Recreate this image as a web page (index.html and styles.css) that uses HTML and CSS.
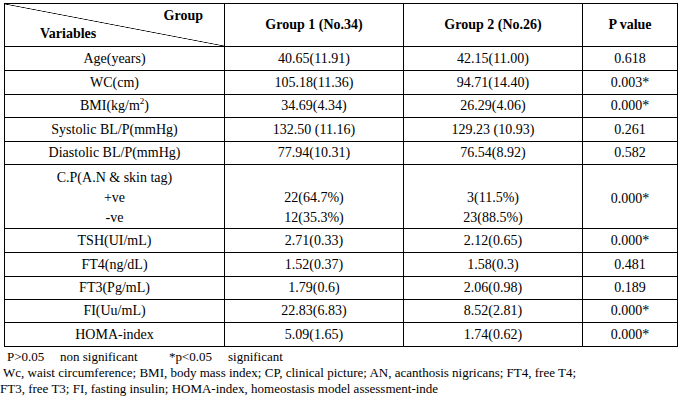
FILE: index.html
```html
<!DOCTYPE html>
<html>
<head>
<meta charset="utf-8">
<link rel="stylesheet" href="styles.css">
</head>
<body>
<div class="page">
  <div class="table">
    <div class="cell head diag">
      <div class="diag-group">Group</div>
      <div class="diag-var">Variables</div>
    </div>
    <div class="cell head">Group 1 (No.34)</div>
    <div class="cell head">Group 2 (No.26)</div>
    <div class="cell head">P value</div>

    <div class="cell">Age(years)</div>
    <div class="cell">40.65(11.91)</div>
    <div class="cell">42.15(11.00)</div>
    <div class="cell">0.618</div>

    <div class="cell">WC(cm)</div>
    <div class="cell">105.18(11.36)</div>
    <div class="cell">94.71(14.40)</div>
    <div class="cell">0.003*</div>

    <div class="cell">BMI(kg/m<sup>2</sup>)</div>
    <div class="cell">34.69(4.34)</div>
    <div class="cell">26.29(4.06)</div>
    <div class="cell">0.000*</div>

    <div class="cell">Systolic BL/P(mmHg)</div>
    <div class="cell">132.50 (11.16)</div>
    <div class="cell">129.23 (10.93)</div>
    <div class="cell">0.261</div>

    <div class="cell">Diastolic BL/P(mmHg)</div>
    <div class="cell">77.94(10.31)</div>
    <div class="cell">76.54(8.92)</div>
    <div class="cell">0.582</div>

    <div class="cell multi">
      <div class="ln">C.P(A.N &amp; skin tag)</div>
      <div class="ln">+ve</div>
      <div class="ln">-ve</div>
    </div>
    <div class="cell multi bottom">
      <div class="ln">22(64.7%)</div>
      <div class="ln">12(35.3%)</div>
    </div>
    <div class="cell multi bottom">
      <div class="ln">3(11.5%)</div>
      <div class="ln">23(88.5%)</div>
    </div>
    <div class="cell pmid">0.000*</div>

    <div class="cell">TSH(UI/mL)</div>
    <div class="cell">2.71(0.33)</div>
    <div class="cell">2.12(0.65)</div>
    <div class="cell">0.000*</div>

    <div class="cell">FT4(ng/dL)</div>
    <div class="cell">1.52(0.37)</div>
    <div class="cell">1.58(0.3)</div>
    <div class="cell">0.481</div>

    <div class="cell">FT3(Pg/mL)</div>
    <div class="cell">1.79(0.6)</div>
    <div class="cell">2.06(0.98)</div>
    <div class="cell">0.189</div>

    <div class="cell">FI(Uu/mL)</div>
    <div class="cell">22.83(6.83)</div>
    <div class="cell">8.52(2.81)</div>
    <div class="cell">0.000*</div>

    <div class="cell">HOMA-index</div>
    <div class="cell">5.09(1.65)</div>
    <div class="cell">1.74(0.62)</div>
    <div class="cell">0.000*</div>
  </div>

  <div class="notes">
    <div class="note-sig">
      <span>P&gt;0.05</span>
      <span>non significant</span>
      <span>*p&lt;0.05</span>
      <span>significant</span>
    </div>
    <div class="note note2">Wc, waist circumference; BMI, body mass index; CP, clinical picture; AN, acanthosis nigricans; FT4, free T4;</div>
    <div class="note note3">FT3, free T3; FI, fasting insulin; HOMA-index, homeostasis model assessment-inde</div>
  </div>
</div>
</body>
</html>
```

FILE: styles.css
```css
html, body {
  margin: 0;
  padding: 0;
  background: #fff;
}

body {
  font-family: "Liberation Serif", "Times New Roman", serif;
  color: #000;
  width: 680px;
  height: 405px;
  overflow: hidden;
}

.page {
  padding: 3px 0 0 4px;
}

.table {
  display: grid;
  width: 674px;
  box-sizing: border-box;
  grid-template-columns: 219px 178px 178px 94px;
  grid-template-rows: 42px 23px 23px 22px 23px 22px 63px 23px 23px 22px 22px 23px;
  gap: 1px;
  padding: 1px;
  background: #000;
}

.cell {
  background: #fff;
  display: flex;
  align-items: center;
  justify-content: center;
  font-size: 14px;
  line-height: 16px;
  white-space: nowrap;
}

.cell sup {
  font-size: 9px;
  line-height: 0;
  position: relative;
  top: -5px;
  vertical-align: baseline;
}

.head {
  font-weight: bold;
}

.diag {
  flex-direction: column;
  align-items: stretch;
  justify-content: flex-start;
  padding-top: 3px;
  box-sizing: border-box;
  background: linear-gradient(to top right, #fff calc(50% - 0.7px), #000 50%, #fff calc(50% + 0.7px));
}

.diag-group {
  line-height: 18px;
  text-align: right;
  padding-right: 21px;
}

.diag-var {
  line-height: 18px;
  text-align: left;
  padding-left: 35px;
}

.multi {
  flex-direction: column;
  justify-content: flex-start;
  padding-top: 3px;
  box-sizing: border-box;
}

.multi.bottom {
  justify-content: flex-end;
  padding-top: 0;
}

.ln {
  line-height: 20px;
}

.pmid {
  padding-top: 4px;
  box-sizing: border-box;
}

.notes {
  font-size: 13px;
  line-height: 16px;
  margin-left: -4px;
  margin-top: 2px;
}

.note-sig {
  display: grid;
  grid-template-columns: 53px 109px 59px auto;
  padding-left: 7px;
}

.note2 {
  padding-left: 3px;
  white-space: nowrap;
}

.note3 {
  padding-left: 0;
  white-space: nowrap;
}
```
